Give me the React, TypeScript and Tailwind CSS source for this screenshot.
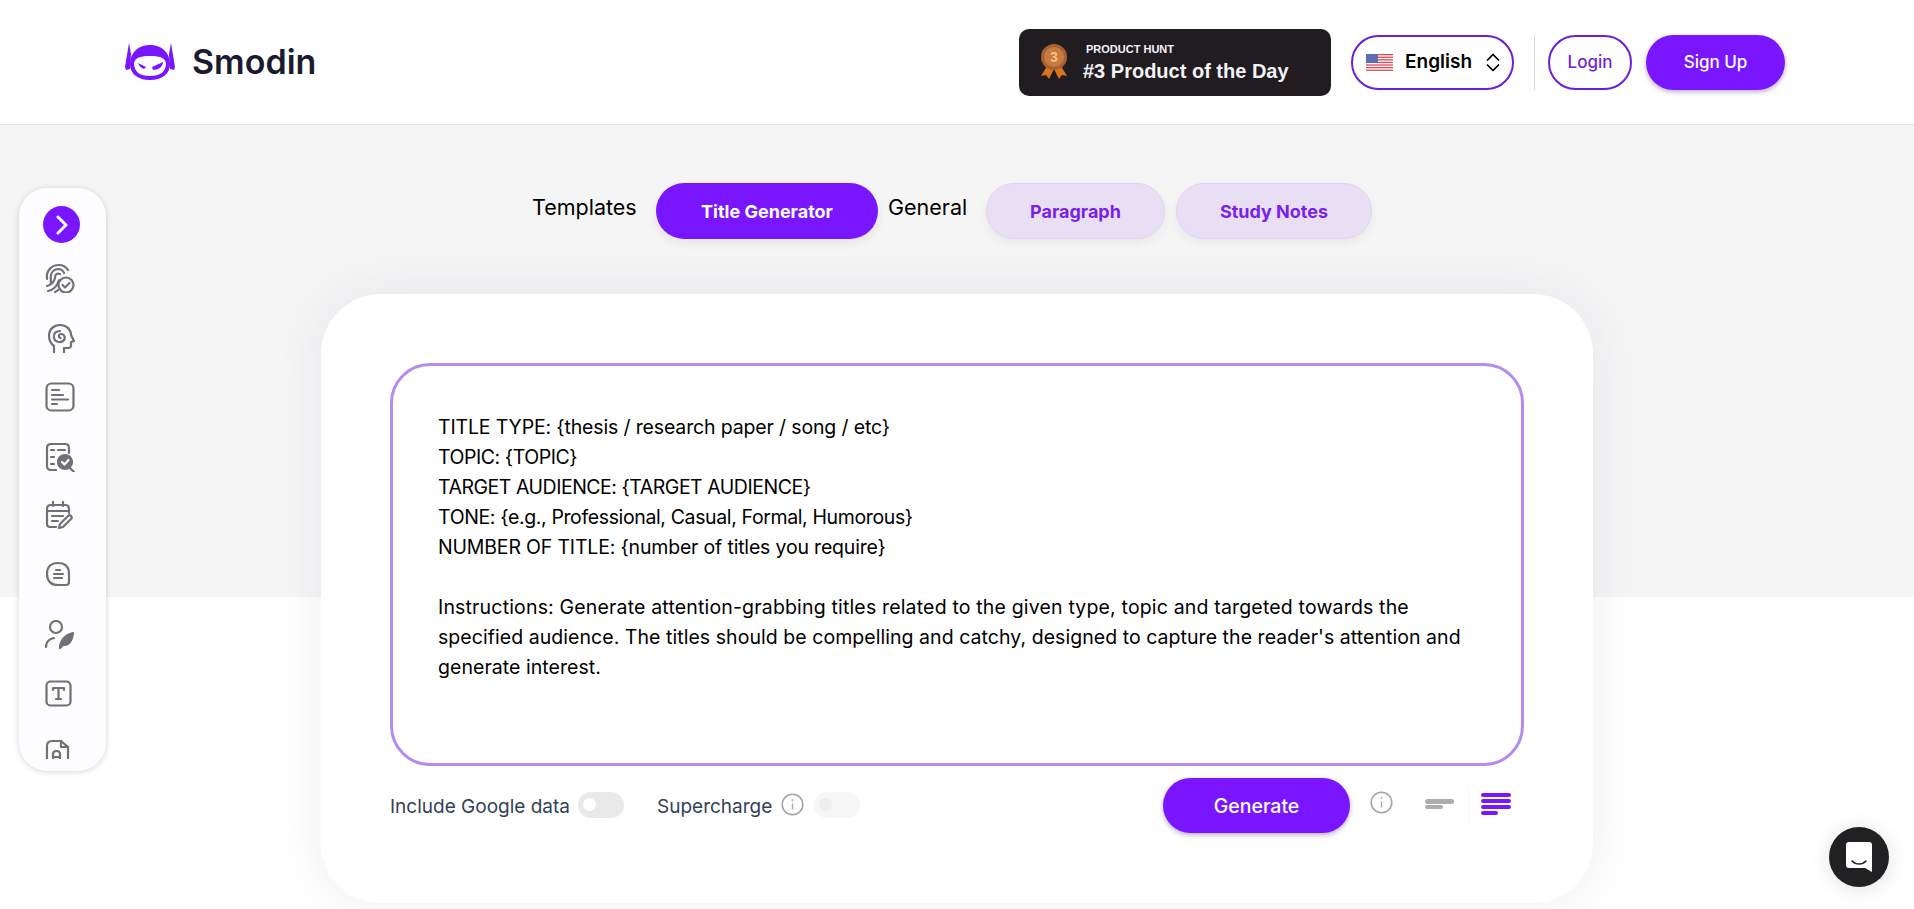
import React from "react";

const S = ({ w = 30, h = 30, children }: { w?: number; h?: number; children: React.ReactNode }) => (
  <svg width={w} height={h} viewBox={`0 0 ${w} ${h}`} fill="none" stroke="#707075" strokeWidth="2.2" strokeLinecap="round" strokeLinejoin="round">
    {children}
  </svg>
);

const Logo = () => (
  <svg width="50" height="38" viewBox="0 0 50 38" className="shrink-0">
    <path d="M4 0 L6 11 L5 26 L1 27 L0 24 Z" fill="#7a16ff" />
    <path d="M46 0 L44 11 L45 26 L49 27 L50 24 Z" fill="#7a16ff" />
    <path d="M25 2 C36 2 45 9 45 21 C45 31 37 37 25 37 C13 37 5 31 5 21 C5 9 14 2 25 2 Z" fill="#7a16ff" />
    <path d="M25 13 C33 13 40 14 41 20 C41 29 35 33 25 33 C15 33 9 29 9 20 C10 14 17 13 25 13 Z" fill="#fff" />
    <path d="M13 20 L21 24 L19 26 C16 25 14 23 13 20 Z" fill="#7a16ff" />
    <path d="M38 19 C38 24 33 27 28 27 L27 24 Z" fill="#7a16ff" />
  </svg>
);

const Medal = () => (
  <svg width="28" height="36" viewBox="0 0 28 36" className="shrink-0">
    <path d="M7 22 L1 32 L6 31 L9 35 L14 25 Z" fill="#d9731c" />
    <path d="M21 22 L27 32 L22 31 L19 35 L14 25 Z" fill="#d9731c" />
    <circle cx="14" cy="13" r="13" fill="#a9602f" />
    <circle cx="14" cy="13" r="10" fill="#c77a42" />
    <text x="14" y="18" textAnchor="middle" fontSize="14" fontWeight="700" fill="#fbbf85" fontFamily="Liberation Sans, sans-serif">3</text>
  </svg>
);

const Flag = () => (
  <svg width="27" height="17" viewBox="0 0 27 17" className="shrink-0">
    <rect width="27" height="17" fill="#fff" />
    {[0, 2.6, 5.2, 7.8, 10.4, 13, 15.6].map((y) => (
      <rect key={y} y={y} width="27" height="1.3" fill="#dc4a52" />
    ))}
    <rect width="12" height="9" fill="#5b6db5" />
  </svg>
);

const Updown = () => (
  <svg width="16" height="19" viewBox="0 0 16 19" fill="none" stroke="#000" strokeWidth="1.7" strokeLinejoin="round" className="shrink-0">
    <path d="M2 7.5 L8 1.5 L14 7.5" />
    <path d="M2 11.5 L8 17.5 L14 11.5" />
  </svg>
);

const Info = () => (
  <svg width="23" height="23" viewBox="0 0 23 23" fill="none" stroke="#a6a6a6" className="shrink-0">
    <circle cx="11.5" cy="11.5" r="10.3" strokeWidth="1.6" />
    <path d="M11.5 10.5 V16.5" strokeWidth="1.3" />
    <circle cx="11.5" cy="7.2" r="0.6" strokeWidth="1" />
  </svg>
);

const Toggle = ({ disabled }: { disabled?: boolean }) => (
  <div className={`mt-[14px] flex h-[26px] w-[46px] shrink-0 items-center rounded-full pl-[5px] ${disabled ? "bg-[#f6f6f6]" : "bg-[#e9e9e9]"}`}>
    <div className={`-mt-[2px] h-[13px] w-[13px] rounded-full ${disabled ? "bg-[#eeeeee]" : "bg-white"}`} />
  </div>
);

const icons = [
  <S key="fp">
    <path d="M2 16 C1 7 7 2 14 2 C18 2 21 4 23 7" />
    <path d="M6 20 C5 12 6 7 13 6 C16 6 18 7 19 10" />
    <path d="M2 23 C6 22 9 19 10 15 C10 11 12 10 15 11" />
    <path d="M3 28 C8 27 12 24 14 17" />
    <path d="M10 29 C11 28.5 12 28 13 27" />
    <circle cx="21" cy="22" r="7.5" />
    <path d="M17.5 22 L20 24.5 L24.5 20" />
  </S>,
  <S key="head">
    <g transform="translate(2 0)">
      <path d="M7 29 V23 C3 20 2 16 2 13 C2 6 7 2 13 2 C20 2 24 7 24 12 L27 18 L24 19 V23 C24 25 22 25 20 25 H17 V29" />
      <path d="M13 8 C8 8 6 12 7 15 C8 19 13 20 16 18 C19 16 18 11 14 11 C11.5 11 11 14 13.5 15" />
    </g>
  </S>,
  <S key="doc">
    <rect x="1.5" y="1.5" width="27" height="27" rx="5" />
    <path d="M7 8 H14 M7 13 H18 M7 17.5 H23 M7 22 H12" />
  </S>,
  <S key="list">
    <path d="M11 28 H6 C3 28 2 27 2 24 V6 C2 3 3 2 6 2 H20 C23 2 24 3 24 6 V11" />
    <path d="M6 8 H9 M13 8 H20 M6 15 H9 M6 22 H9" />
    <circle cx="20" cy="20" r="7" fill="#707075" />
    <path d="M17 20 L19.5 22.5 L23.5 18" stroke="#fff" />
    <path d="M25 26 L29 30" />
  </S>,
  <S key="cal">
    <path d="M11 26 H5 C3 26 2 25 2 23 V8 C2 5 3 4 6 4 H20 C23 4 24 5 24 8 V12" />
    <path d="M2 10 H24 M8 1 V5 M18 1 V5 M7 15 H18 M7 20 H13" />
    <path d="M14 27 L15 23 L23 15 C25 13 28 16 26 18 L18 26 Z" />
  </S>,
  <S key="bubble">
    <path d="M13 2 C20 2 24 6 24 13 V21 C24 23 23 24 21 24 H13 C6 24 2 20 2 13 C2 6 6 2 13 2 Z" />
    <path d="M11 9 H15 M9 13 H18 M9 17 H17" />
  </S>,
  <S key="person">
    <circle cx="11" cy="7" r="6" />
    <path d="M1 27 C1 22 4 19 9 18" />
    <path d="M15 28 C15 22 19 15 28 13 C27 21 24 25 18 25 Z" fill="#707075" />
  </S>,
  <S key="t">
    <rect x="1.5" y="1.5" width="24" height="24" rx="4" />
    <path d="M8 10 V8 H19 V10 M13.5 8 V19 M11 19 H16" />
  </S>,
  <S key="a">
    <path d="M2 30 V7 C2 3 4 2 7 2 H16 L23 8 V30" />
    <path d="M16 2 V8 H23" />
    <path d="M8 22 V15 C8 11 15 11 15 15 V22 M8 18 H15" />
  </S>,
];

export default function App() {
  return (
    <div className="relative h-[909px] overflow-hidden bg-white font-['Inter',sans-serif] text-black">
      <header className="flex h-[125px] items-center border-b border-[#e4e4e6] bg-white pl-[125px] pr-[129px] shadow-[0_1px_3px_rgba(0,0,0,0.05)]">
        <Logo />
        <span className="ml-[17px] text-[34px] font-semibold leading-none text-[#1b1b2f]">Smodin</span>
        <div className="ml-auto flex items-center">
          <div className="mr-[20px] flex h-[67px] w-[312px] items-center rounded-[10px] bg-[#211c1f] pl-[21px] font-['Liberation_Sans',sans-serif] text-[#f3f3fa]">
            <Medal />
            <div className="ml-[15px] mt-[2px] flex flex-col">
              <span className="pl-[3px] text-[11px] font-bold leading-[14px]">PRODUCT HUNT</span>
              <span className="mt-[2px] text-[20px] font-bold leading-[26px]">#3 Product of the Day</span>
            </div>
          </div>
          <div className="flex h-[55px] w-[163px] items-center rounded-full border-2 border-[#6d1fd8] pl-[13px] text-[19px] font-semibold">
            <Flag />
            <span className="ml-[12px] w-[80px]">English</span>
            <Updown />
          </div>
          <div className="mx-[13px] ml-[20px] h-[55px] w-px bg-[#d9d9d9]" />
          <div className="flex h-[55px] w-[84px] items-center justify-center rounded-full border-2 border-[#6d1fd8] pt-[2px] text-[17px] font-medium text-[#6d1fd8]">Login</div>
          <div className="ml-[14px] flex h-[55px] w-[139px] items-center justify-center rounded-full bg-[#7a16ff] pt-[2px] text-[17px] font-medium text-white shadow-[0_2px_5px_rgba(60,20,120,0.35)]">Sign Up</div>
        </div>
      </header>

      <main className="bg-[linear-gradient(#f5f5f6_472px,#ffffff_472px)] pt-[58px]">
        <div className="flex items-start justify-center pr-[10px] text-[21.5px]">
          <div className="flex h-[48px] w-[105px] items-center whitespace-nowrap">Templates</div>
          <div className="ml-[19px] flex h-[56px] w-[222px] items-center justify-center rounded-full bg-[#7a16ff] pt-[1px] text-[18px] font-bold text-white shadow-[0_4px_10px_rgba(0,0,0,0.08)]">Title Generator</div>
          <div className="ml-[10px] flex h-[48px] w-[79px] items-center whitespace-nowrap">General</div>
          <div className="ml-[19px] flex h-[56px] w-[179px] items-center justify-center rounded-full border border-[#dfd3f3] bg-[#e8dff5] pt-[1px] text-[18px] font-bold text-[#7a1fe8] shadow-[0_4px_10px_rgba(0,0,0,0.06)]">Paragraph</div>
          <div className="ml-[11px] flex h-[56px] w-[196px] items-center justify-center rounded-full border border-[#dfd3f3] bg-[#e8dff5] pt-[1px] text-[18px] font-bold text-[#7a1fe8] shadow-[0_4px_10px_rgba(0,0,0,0.06)]">Study Notes</div>
        </div>

        <section className="mx-auto mt-[55px] h-[609px] w-[1272px] rounded-[60px] bg-white px-[69px] pt-[69px] shadow-[0_0_50px_rgba(40,30,70,0.07)]">
          <div className="h-[403px] w-[1134px] whitespace-pre rounded-[40px] border-[3px] border-[#b48cf0] bg-white pl-[45px] pt-[46px] text-[19.5px] leading-[30px] text-black">
            <p className="tracking-[-0.15px]">{"TITLE TYPE: {thesis / research paper / song / etc}"}</p>
            <p className="tracking-[-0.45px]">{"TOPIC: {TOPIC}"}</p>
            <p className="tracking-[-0.48px]">{"TARGET AUDIENCE: {TARGET AUDIENCE}"}</p>
            <p className="tracking-[-0.37px]">{"TONE: {e.g., Professional, Casual, Formal, Humorous}"}</p>
            <p className="tracking-[-0.18px]">{"NUMBER OF TITLE: {number of titles you require}"}</p>
            <p className="h-[30px]" />
            <p className="tracking-[0.17px]">Instructions: Generate attention-grabbing titles related to the given type, topic and targeted towards the</p>
            <p className="tracking-[0.05px]">specified audience. The titles should be compelling and catchy, designed to capture the reader's attention and</p>
            <p className="tracking-[0.05px]">generate interest.</p>
          </div>

          <div className="mt-[12px] flex items-start pr-[13px] text-[19px] text-[#334155]">
            <span className="mt-[15px] w-[179px] whitespace-nowrap leading-[28px]">Include Google data</span>
            <div className="ml-[9px]"><Toggle /></div>
            <span className="ml-[33px] mt-[15px] w-[114px] whitespace-nowrap leading-[28px]">Supercharge</span>
            <div className="ml-[10px] mt-[15px]"><Info /></div>
            <div className="ml-[10px]"><Toggle disabled /></div>

            <div className="ml-auto flex items-start">
              <div className="flex h-[55px] w-[187px] items-center justify-center rounded-full bg-[#7a16ff] pt-[2px] text-[19.5px] font-medium text-white shadow-[0_2px_5px_rgba(60,20,120,0.35)]">Generate</div>
              <div className="ml-[20px] mt-[13px]"><Info /></div>
              <div className="ml-[32px] mt-[21px] flex w-[29px] flex-col gap-[1.5px]">
                <div className="h-[4.5px] w-[29px] rounded-full bg-[#adadad]" />
                <div className="h-[4px] w-[18px] rounded-full bg-[#adadad]" />
              </div>
              <div className="ml-[14px] mt-[10px] h-[38px] w-px bg-[#f8f8f8]" />
              <div className="ml-[12px] mt-[15px] flex w-[30px] flex-col gap-[2px]">
                <div className="h-[4px] rounded-full bg-[#7a16ff]" />
                <div className="h-[4px] rounded-full bg-[#7a16ff]" />
                <div className="h-[4px] rounded-full bg-[#7a16ff]" />
                <div className="h-[4px] w-[17px] rounded-full bg-[#7a16ff]" />
              </div>
            </div>
          </div>
        </section>
      </main>

      <aside className="absolute left-[19px] top-[188px] h-[583px] w-[87px] rounded-[28px] bg-[#fdfcff] shadow-[0_1px_6px_rgba(0,0,0,0.16)]">
        <div className="h-[571px] overflow-hidden pl-[24px] pt-[18px]">
          <div className="mb-[20px] flex h-[37px] w-[37px] items-center justify-center rounded-full bg-[#7a16ff]">
            <svg width="14" height="20" viewBox="0 0 14 20" fill="none" stroke="#fff" strokeWidth="3" strokeLinecap="round" strokeLinejoin="round">
              <path d="M3 2 L11 10 L3 18" />
            </svg>
          </div>
          <div className="flex flex-col gap-[29.5px] pl-[2px]">
            {icons.map((icon, i) => (
              <div key={i} className="h-[30px] w-[30px]">{icon}</div>
            ))}
          </div>
        </div>
      </aside>

      <div className="absolute left-[1829px] top-[827px] flex h-[60px] w-[60px] items-center justify-center rounded-full bg-[#212124] shadow-[0_2px_20px_rgba(0,0,0,0.12)]">
        <svg width="28" height="32" viewBox="0 0 28 32">
          <path d="M4 1 H24 C26 1 27 2 27 4 V31 L20 27 H4 C2 27 1 26 1 24 V4 C1 2 2 1 4 1 Z" fill="#fff" />
          <path d="M7 20 C11 24 17 24 21 20" fill="none" stroke="#212124" strokeWidth="1.6" strokeLinecap="round" />
        </svg>
      </div>
    </div>
  );
}
